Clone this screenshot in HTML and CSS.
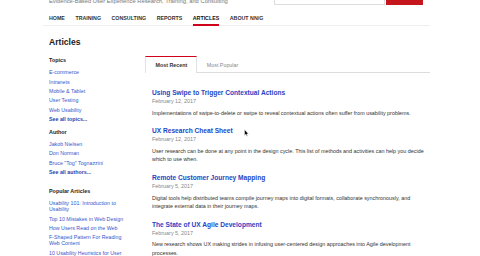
FILE: index.html
```html
<!DOCTYPE html>
<html lang="en">
<head>
    <meta charset="UTF-8">
    <title>Articles | Nielsen Norman Group</title>
    <link rel="stylesheet" href="styles.css">
</head>
<body>
    <div class="page">
        <div class="topbar">
            <div class="tagline">Evidence-Based User Experience Research, Training, and Consulting</div>
            <div class="search">
                <input type="text" class="search-input">
                <button class="search-btn">Search</button>
            </div>
        </div>

        <ul class="nav">
            <li>Home</li>
            <li>Training</li>
            <li>Consulting</li>
            <li>Reports</li>
            <li class="active">Articles</li>
            <li>About NN/g</li>
        </ul>

        <div class="content">
            <div class="sidebar">
                <h1>Articles</h1>

                <div class="side-block">
                    <h3>Topics</h3>
                    <ul>
                        <li><a href="#">E-commerce</a></li>
                        <li><a href="#">Intranets</a></li>
                        <li><a href="#">Mobile &amp; Tablet</a></li>
                        <li><a href="#">User Testing</a></li>
                        <li><a href="#">Web Usability</a></li>
                        <li><a href="#" class="more">See all topics...</a></li>
                    </ul>
                </div>

                <div class="side-block">
                    <h3>Author</h3>
                    <ul>
                        <li><a href="#">Jakob Nielsen</a></li>
                        <li><a href="#">Don Norman</a></li>
                        <li><a href="#">Bruce "Tog" Tognazzini</a></li>
                        <li><a href="#" class="more">See all authors...</a></li>
                    </ul>
                </div>

                <div class="side-block popular">
                    <h3>Popular Articles</h3>
                    <ul>
                        <li><a href="#">Usability 101: Introduction to Usability</a></li>
                        <li><a href="#">Top 10 Mistakes in Web Design</a></li>
                        <li><a href="#">How Users Read on the Web</a></li>
                        <li><a href="#">F-Shaped Pattern For Reading Web Content</a></li>
                        <li><a href="#">10 Usability Heuristics for User Interface Design</a></li>
                    </ul>
                </div>
            </div>

            <div class="main">
                <div class="tabs">
                    <div class="tab active">Most Recent</div>
                    <div class="tab">Most Popular</div>
                </div>

                <div class="article-list">
                    <div class="article">
                        <h2><a href="#">Using Swipe to Trigger Contextual Actions</a></h2>
                        <div class="date">February 12, 2017</div>
                        <p>Implementations of swipe-to-delete or swipe to reveal contextual actions often suffer from usability problems.</p>
                    </div>
                    <div class="article">
                        <h2><a href="#">UX Research Cheat Sheet</a></h2>
                        <div class="date">February 12, 2017</div>
                        <p>User research can be done at any point in the design cycle. This list of methods and activities can help you decide which to use when.</p>
                    </div>
                    <div class="article">
                        <h2><a href="#">Remote Customer Journey Mapping</a></h2>
                        <div class="date">February 5, 2017</div>
                        <p>Digital tools help distributed teams compile journey maps into digital formats, collaborate synchronously, and integrate external data in their journey maps.</p>
                    </div>
                    <div class="article">
                        <h2><a href="#">The State of UX Agile Development</a></h2>
                        <div class="date">February 5, 2017</div>
                        <p>New research shows UX making strides in infusing user-centered design approaches into Agile development processes.</p>
                    </div>
                </div>
            </div>
        </div>
    </div>

    <svg class="cursor" width="5" height="8" viewBox="0 0 5 8">
        <path d="M0.5 0.5 L0.5 6.5 L1.8 5.2 L2.8 7.3 L3.6 6.9 L2.7 4.9 L4.5 4.9 Z" fill="#000" stroke="#fff" stroke-width="0.5"/>
    </svg>
</body>
</html>
```

FILE: styles.css
```css
body {
    margin: 0;
    font-family: "Liberation Sans", Arial, sans-serif;
    background-color: #fff;
    color: #333;
    overflow: hidden;
}
a {
    text-decoration: none;
}
ul {
    list-style: none;
    margin: 0;
    padding: 0;
}
.page {
    width: 387px;
    margin-left: 43px;
}

/* top row, scrolled mostly out of view */
.topbar {
    display: flex;
    align-items: flex-end;
    height: 16px;
    margin-top: -11px;
    padding-left: 6px;
}
.tagline {
    flex: 1;
    font-size: 5.8px;
    line-height: 6px;
    color: #777;
    white-space: nowrap;
    margin-bottom: 1.2px;
}
.search {
    display: flex;
    height: 16px;
    margin-right: 7px;
}
.search-input {
    width: 111px;
    height: 16px;
    box-sizing: border-box;
    border: 1px solid #ddd;
    margin: 0 1px 0 0;
    padding: 0;
}
.search-btn {
    width: 37px;
    height: 16px;
    border: none;
    padding: 0 0 9px;
    background-color: #c4161c;
    color: #fff;
    font-family: inherit;
    font-size: 6px;
    font-weight: bold;
}

.nav {
    display: flex;
    gap: 10.5px;
    margin-top: 10px;
    padding-left: 6px;
    border-bottom: 1px solid #eee;
}
.nav li {
    font-size: 5.3px;
    line-height: 6px;
    font-weight: bold;
    text-transform: uppercase;
    color: #333;
    padding-bottom: 3px;
}
.nav li.active {
    color: #111;
    border-bottom: 2px solid #d0021b;
    margin-bottom: -1px;
}

.content {
    display: flex;
    padding-left: 6px;
}
.sidebar {
    width: 96px;
    flex-shrink: 0;
}
.sidebar h1 {
    font-size: 8.6px;
    line-height: 10px;
    margin: 10.6px 0 10.3px;
    color: #222;
}
.side-block {
    margin-bottom: 6.7px;
}
.side-block.popular {
    margin-top: 12.9px;
}
.side-block h3 {
    font-size: 5.4px;
    line-height: 7px;
    margin: 0 0 5.5px;
    color: #222;
}
.side-block ul {
    display: flex;
    flex-direction: column;
    gap: 3.3px;
    padding-right: 14px;
}
.side-block li {
    font-size: 5.3px;
    line-height: 6px;
}
.side-block a {
    color: #3657cc;
}
.side-block a.more {
    color: #1e3fae;
    font-weight: bold;
}

.main {
    flex: 1;
}
.tabs {
    display: flex;
    margin-top: 30px;
    border-bottom: 1px solid #ddd;
}
.tab {
    font-size: 5.35px;
    line-height: 6px;
    color: #888;
    padding: 5.4px 9px 3.6px 9.5px;
    border-top: 1px solid transparent;
}
.tab.active {
    color: #333;
    font-weight: bold;
    background-color: #fff;
    border-top: 1px solid #d0021b;
    border-left: 1px solid #e2e2e2;
    border-right: 1px solid #e2e2e2;
    padding-bottom: 4.6px;
    margin-bottom: -1px;
}

.article-list {
    margin-top: 15px;
    padding-left: 7px;
}
.article {
    margin-bottom: 8.7px;
}
.article h2 {
    font-size: 6.6px;
    line-height: 9px;
    margin: 0;
}
.article h2 a {
    color: #1f45c4;
}
.date {
    font-size: 5.4px;
    line-height: 9px;
    color: #888;
}
.article p {
    font-size: 5.4px;
    line-height: 8.7px;
    margin: 2.7px 0 0;
    color: #333;
}

.cursor {
    position: absolute;
    left: 244px;
    top: 129px;
}
```
